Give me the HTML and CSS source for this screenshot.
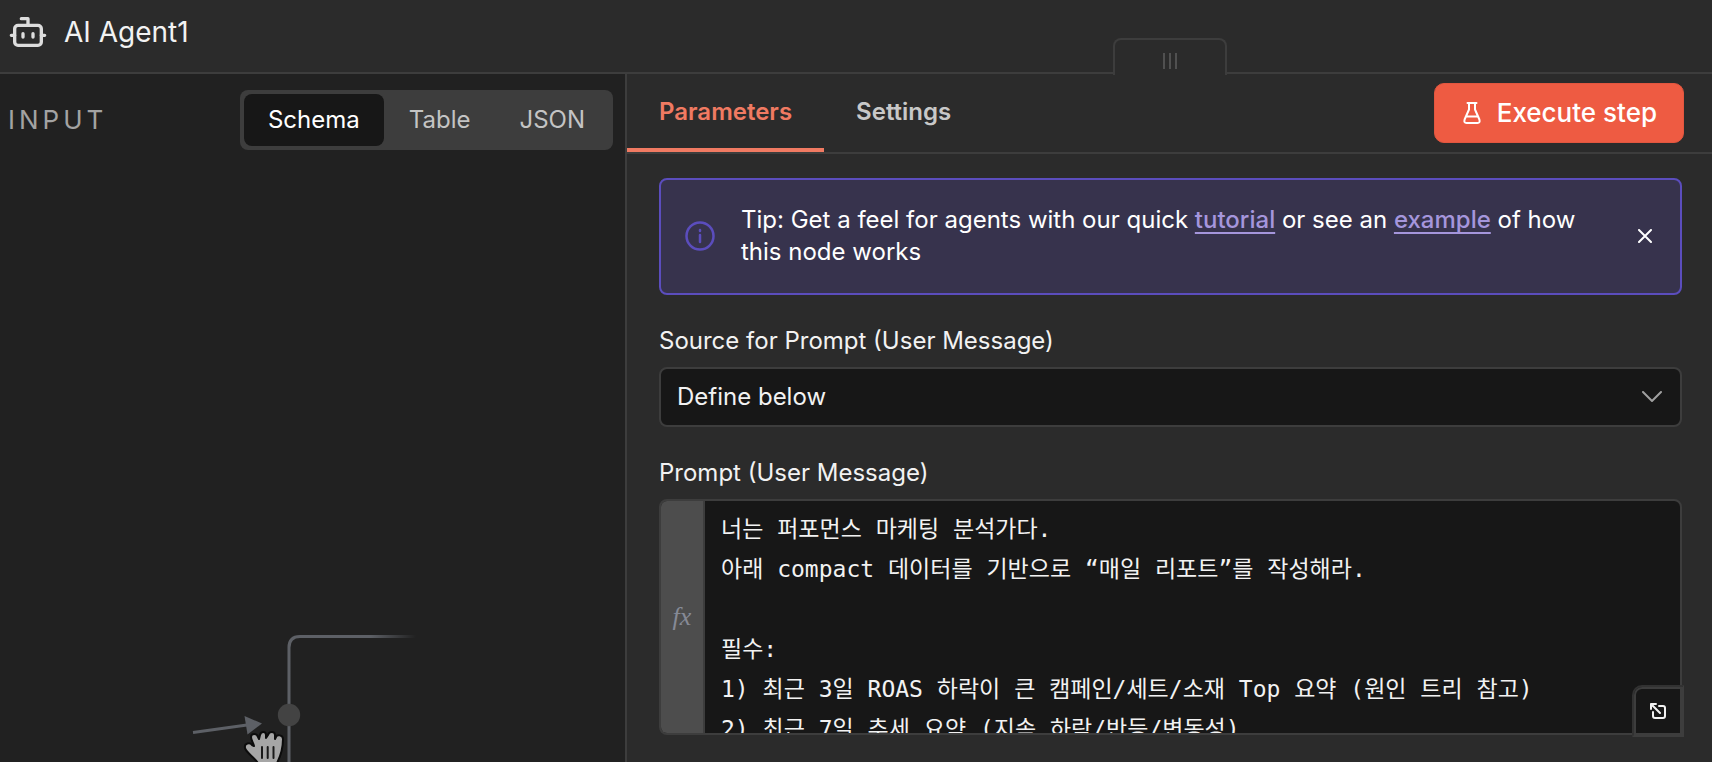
FILE: index.html
```
<!DOCTYPE html>
<html lang="ko">
<head>
    <meta charset="UTF-8">
    <meta name="viewport" content="width=device-width, initial-scale=1.0">
    <title>AI Agent1</title>
    <link rel="stylesheet" href="styles.css">
</head>
<body>

    <header class="header">
        <svg class="botIcon" viewBox="0 0 24 24" aria-hidden="true">
            <path d="M12 8V4H8"/>
            <rect x="4" y="8" width="16" height="12" rx="2"/>
            <path d="M2 14h2M20 14h2M15 13v2M9 13v2"/>
        </svg>
        <h1>AI Agent1</h1>
    </header>

    <main class="panels">
        <!-- Input side with the canvas showing at the bottom -->
        <section class="inputPanel">
            <div class="inputHeader">
                <h2>INPUT</h2>
                <div class="viewSwitch">
                    <button type="button" class="active">Schema</button>
                    <button type="button">Table</button>
                    <button type="button">JSON</button>
                </div>
            </div>

            <svg class="canvas" viewBox="0 0 280 140" aria-hidden="true">
                <defs>
                    <linearGradient id="fade" gradientUnits="userSpaceOnUse" x1="210" y1="0" x2="256" y2="0">
                        <stop offset="0" stop-color="#5d6066"/>
                        <stop offset="1" stop-color="#5d6066" stop-opacity="0"/>
                    </linearGradient>
                </defs>
                <path class="edge" stroke="url(#fade)" d="M129 140V25.500q0 -11 11 -11H256"/>
                <path class="edge" stroke="#5d6066" d="M33 110.500L87 103"/>
                <path fill="#5d6066" d="M84.500 94L102 101.500L87.500 112.500Z"/>
                <circle cx="129" cy="93" r="11.200" fill="#434343"/>
                <path class="hand" d="M99 143C96 136 86 131 85 126C84 121 90 120 92 123L94 124C93 120 91 118 91 115C91 111 97 111 98 115L99 117L100 113C101 109 106 109 106 113V116L108 113C109 109 115 109 115 113V117L116 115C117 112 123 113 123 117C123 127 121 134 116 143Z"/>
                <path class="knuckles" d="M102 125v11M107.700 125v11M113.500 125v11"/>
            </svg>
        </section>

        <!-- Node settings -->
        <section class="nodePanel">
            <button type="button" class="dragHandle" aria-label="Resize panels">
                <i></i><i></i><i></i>
            </button>

            <div class="tabBar">
                <nav class="tabs">
                    <a href="#parameters" class="active">Parameters</a>
                    <a href="#settings">Settings</a>
                </nav>
                <button type="button" class="executeButton">
                    <svg viewBox="0 0 18 22" aria-hidden="true">
                        <path d="M4.500 1H13.500M6 1V7.500L1.600 17.500Q0.600 21 3.500 21H14.500Q17.400 21 16.400 17.500L12 7.500V1M3.500 14.500H14.500"/>
                    </svg>
                    Execute step
                </button>
            </div>

            <div class="parameters">
                <div class="tip">
                    <svg class="infoIcon" viewBox="0 0 30 30" aria-hidden="true">
                        <circle cx="15" cy="15" r="13.500"/>
                        <path d="M15 14v7M15 9v1"/>
                    </svg>
                    <p>Tip: Get a feel for agents with our quick <a href="#tutorial">tutorial</a> or see an <a href="#example">example</a> of how this node works</p>
                    <button type="button" class="closeButton" aria-label="Close tip">
                        <svg viewBox="0 0 14 14" aria-hidden="true"><path d="M1 1l12 12M13 1L1 13"/></svg>
                    </button>
                </div>

                <div class="field">
                    <label for="source">Source for Prompt (User Message)</label>
                    <div class="selectBox">
                        <select id="source">
                            <option>Define below</option>
                        </select>
                        <svg viewBox="0 0 20 12" aria-hidden="true"><path d="M1 1l9 9l9 -9"/></svg>
                    </div>
                </div>

                <div class="field">
                    <label for="prompt">Prompt (User Message)</label>
                    <div class="editor">
                        <span class="fx">fx</span>
                        <textarea id="prompt" spellcheck="false">너는 퍼포먼스 마케팅 분석가다.
아래 compact 데이터를 기반으로 “매일 리포트”를 작성해라.

필수:
1) 최근 3일 ROAS 하락이 큰 캠페인/세트/소재 Top 요약 (원인 트리 참고)
2) 최근 7일 추세 요약 (지속 하락/반등/변동성)</textarea>
                        <button type="button" class="expandButton" aria-label="Open editor">
                            <svg viewBox="0 0 16 16" aria-hidden="true">
                                <path d="M1 6V1H6M1 1L10 10M9 3H13Q15 3 15 5V13Q15 15 13 15H5Q3 15 3 13V9"/>
                            </svg>
                        </button>
                    </div>
                </div>
            </div>
        </section>
    </main>

</body>
</html>
```
FILE: styles.css
```
* {
    box-sizing: border-box;
}

body {
    margin: 0;
    min-height: 100vh;
    display: flex;
    flex-direction: column;
    background: #2b2b2b;
    color: #f2f2f2;
    font-family: Inter, 'Noto Sans CJK KR', sans-serif;
    font-size: 24px;
    line-height: 32px;
}

h1, h2, p {
    margin: 0;
    font-weight: 400;
}

button, select, textarea {
    font: inherit;
    color: inherit;
    margin: 0;
    padding: 0;
    border: none;
    background: none;
}

button {
    cursor: pointer;
}

svg {
    display: block;
    flex: none;
    fill: none;
    stroke-linecap: round;
    stroke-linejoin: round;
}

/* Header */
.header {
    display: flex;
    align-items: center;
    gap: 16px;
    padding: 12px 8px 20px;
    border-bottom: 2px solid #3d3d3d;
}

.header h1 {
    font-size: 28px;
    line-height: 40px;
}

.botIcon {
    width: 40px;
    height: 40px;
    stroke: #dddddd;
    stroke-width: 2;
}

/* Two panels side by side */
.panels {
    flex: 1;
    display: grid;
    grid-template-columns: minmax(0, 627fr) minmax(0, 1085fr);
}

.inputPanel {
    display: flex;
    flex-direction: column;
    justify-content: space-between;
    background: #212121;
    border-right: 2px solid #3d3d3d;
}

.inputHeader {
    display: flex;
    align-items: center;
    justify-content: space-between;
    padding: 16px 12px 0 8px;
}

.inputHeader h2 {
    font-size: 26px;
    letter-spacing: 4px;
    color: #a3a3a3;
}

.viewSwitch {
    display: flex;
    gap: 1px;
    padding: 4px;
    border-radius: 8px;
    background: #3d3d3d;
}

.viewSwitch button {
    padding: 10px 24px;
    border-radius: 8px;
    color: #c4c4c4;
}

.viewSwitch .active {
    background: #171717;
    color: #ffffff;
}

.canvas {
    width: 280px;
    height: 140px;
    margin-left: 160px;
}

.edge {
    stroke-width: 3;
    stroke-linecap: butt;
}

.hand {
    fill: #a6a6a6;
    stroke: #0c0c0c;
    stroke-width: 2;
}

.knuckles {
    stroke: #1a1a1a;
    stroke-width: 2;
}

/* Node panel */
.nodePanel {
    position: relative;
}

.dragHandle {
    position: absolute;
    top: -36px;
    left: 50%;
    transform: translateX(-50%);
    width: 114px;
    height: 37px;
    display: flex;
    justify-content: center;
    align-items: center;
    gap: 4px;
    padding-top: 6px;
    border: 2px solid #3d3d3d;
    border-bottom: none;
    border-radius: 8px 8px 0 0;
    background: #2b2b2b;
}

.dragHandle i {
    width: 2px;
    height: 16px;
    background: #505050;
}

.tabBar {
    display: flex;
    align-items: center;
    justify-content: space-between;
    height: 80px;
    padding-right: 28px;
    border-bottom: 2px solid #3d3d3d;
}

.tabs {
    align-self: stretch;
    display: flex;
}

.tabs a {
    padding: 22px 32px 20px;
    border-bottom: 4px solid transparent;
    color: #c8c8c8;
    font-weight: 600;
    text-decoration: none;
}

.tabs .active {
    border-color: #f07a62;
    color: #f07a62;
}

.executeButton {
    display: flex;
    align-items: center;
    gap: 16px;
    padding: 14px 26px 14px 28px;
    border-radius: 10px;
    background: #ee5b42;
    border: 1px solid #e2563f;
    color: #ffffff;
    font-size: 26px;
    font-weight: 500;
    line-height: 30px;
}

.executeButton svg {
    width: 18px;
    height: 22px;
    stroke: #ffffff;
    stroke-width: 2;
}

.parameters {
    display: flex;
    flex-direction: column;
    gap: 30px;
    padding: 24px 30px 27px 32px;
}

/* Tip box */
.tip {
    display: flex;
    align-items: center;
    gap: 26px;
    padding: 24px 28px 25px 24px;
    border: 2px solid #5b4dbd;
    border-radius: 8px;
    background: #37334d;
    color: #ffffff;
}

.tip p {
    flex: 1;
}

.tip a {
    color: #a596dc;
    font-weight: 500;
    text-decoration: underline;
    text-decoration-thickness: 2px;
    text-decoration-skip-ink: none;
    text-underline-offset: 4px;
}

.infoIcon {
    width: 30px;
    height: 30px;
    stroke: #5b4dbd;
    stroke-width: 2.5;
}

.closeButton svg {
    width: 14px;
    height: 14px;
    stroke: #ffffff;
    stroke-width: 2;
}

/* Form fields */
.field {
    display: flex;
    flex-direction: column;
    gap: 10px;
}

.selectBox {
    position: relative;
}

.selectBox select {
    appearance: none;
    width: 100%;
    height: 60px;
    padding: 0 48px 0 16px;
    border: 2px solid #3d3d3d;
    border-radius: 8px;
    background: #171717;
}

.selectBox svg {
    position: absolute;
    top: 24px;
    right: 20px;
    width: 20px;
    height: 12px;
    stroke: #a0a0a0;
    stroke-width: 2;
    pointer-events: none;
}

.editor {
    position: relative;
    display: flex;
    height: 236px;
    border: 2px solid #3d3d3d;
    border-radius: 8px;
    background: #171717;
}

.fx {
    width: 44px;
    display: flex;
    align-items: center;
    justify-content: center;
    border-right: 2px solid #3d3d3d;
    border-radius: 6px 0 0 6px;
    background: #4d4d4d;
    color: #868a96;
    font-family: 'Liberation Serif', serif;
    font-size: 26px;
    font-style: italic;
}

.editor textarea {
    flex: 1;
    padding: 8px 16px 0;
    resize: none;
    outline: none;
    overflow: hidden;
    font-family: 'DejaVu Sans Mono', 'Noto Sans CJK KR', monospace;
    font-size: 23px;
    line-height: 40px;
}

.expandButton {
    position: absolute;
    right: -4px;
    bottom: -4px;
    width: 52px;
    height: 52px;
    display: flex;
    align-items: center;
    justify-content: center;
    border: 2px solid #3d3d3d;
    border-top-color: #323232;
    border-left-color: #323232;
    border-radius: 10px 0 0 0;
    background: #171717;
    box-shadow: inset 0 0 0 2px #3d3d3d;
}

.expandButton svg {
    width: 16px;
    height: 16px;
    stroke: #f2f2f2;
    stroke-width: 2;
}
```
